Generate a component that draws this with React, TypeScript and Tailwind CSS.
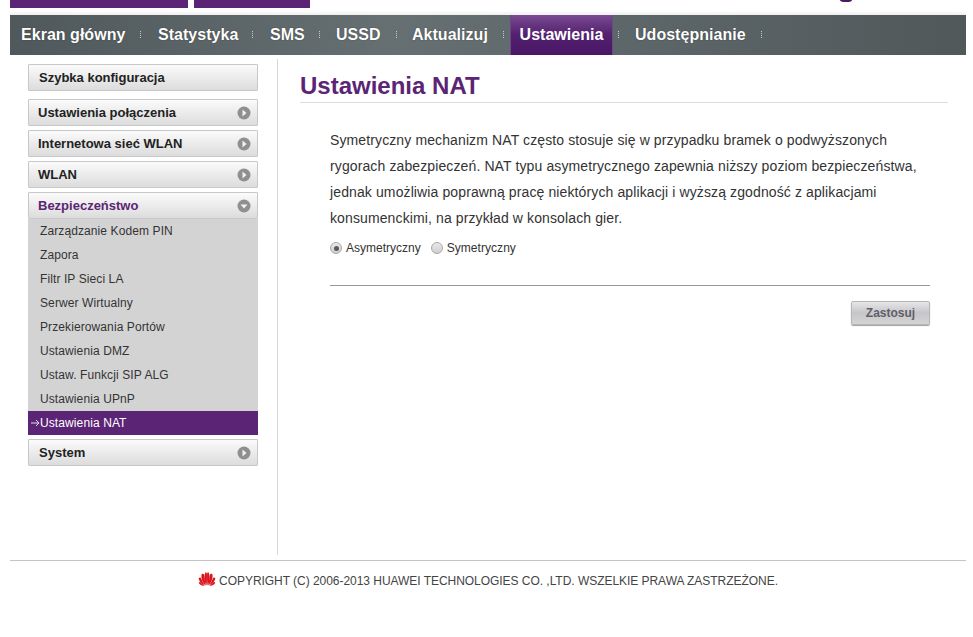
import React from "react";

const font = "font-['Liberation_Sans',Arial,sans-serif]";

function Sep({ pos }: { pos: string }) {
  return (
    <span className={`flex flex-col gap-[1px] w-[1px] absolute top-[16px] ${pos}`}>
      <i className="block h-[1px] w-[1px] bg-[#c5cccc]" />
      <i className="block h-[1px] w-[1px] bg-[#c5cccc]" />
      <i className="block h-[1px] w-[1px] bg-[#c5cccc]" />
      <i className="block h-[1px] w-[1px] bg-[#c5cccc]" />
    </span>
  );
}

const navItems = [
  { label: "Ekran główny", w: "w-[137px]", sep: "left-[130px]" },
  { label: "Statystyka", w: "w-[112px]", sep: "left-[105px]" },
  { label: "SMS", w: "w-[66px]", sep: "left-[60px]" },
  { label: "USSD", w: "w-[76px]", sep: "left-[71px]" },
  { label: "Aktualizuj", w: "w-[109px]", sep: "left-[102px]" },
];

function Arrow({ down }: { down?: boolean }) {
  return (
    <svg width="14" height="14" viewBox="0 0 14 14" className="shrink-0">
      <circle cx="7" cy="7" r="6.5" fill="#8f8f8f" />
      {down ? <path d="M3.5 5.5h7L7 9.5z" fill="#f2f2f2" /> : <path d="M5.5 3.5v7l4-3.5z" fill="#f2f2f2" />}
    </svg>
  );
}

function MenuHead({ label, mb, active, noArrow, pl = "pl-[9px]" }: { label: string; mb: string; active?: boolean; noArrow?: boolean; pl?: string }) {
  return (
    <div className={`h-[27px] ${mb} flex items-center justify-between ${pl} pr-[6px] border border-[#c8c8c8] rounded-[1px] bg-gradient-to-b from-[#fbfbfb] to-[#dcdcdc] text-[13px] font-bold ${active ? "text-[#5b2474]" : "text-[#222]"}`}>
      <span>{label}</span>
      {!noArrow && <Arrow down={active} />}
    </div>
  );
}

const subs = [
  "Zarządzanie Kodem PIN",
  "Zapora",
  "Filtr IP Sieci LA",
  "Serwer Wirtualny",
  "Przekierowania Portów",
  "Ustawienia DMZ",
  "Ustaw. Funkcji SIP ALG",
  "Ustawienia UPnP",
];

function Radio({ on }: { on?: boolean }) {
  return (
    <span className="w-[12px] h-[12px] rounded-full border border-[#a8a8a8] bg-gradient-to-b from-[#e8e8e8] to-[#d0d0d0] flex items-center justify-center shrink-0">
      {on && <span className="w-[5px] h-[5px] rounded-full bg-[#5a5a5a]" />}
    </span>
  );
}

export default function App() {
  return (
    <div className={`${font} w-[973px] h-[637px] bg-white overflow-hidden`}>
      <div className="px-[10px] w-[966px] box-content">
        <div className="h-[15px] relative bg-gradient-to-b from-white from-70% to-[#eeeeee] w-[956px]">
          <div className="flex gap-[6px]">
            <div className="w-[178px] h-[8px] bg-[#5b2474]" />
            <div className="w-[116px] h-[8px] bg-[#5b2474]" />
          </div>
          <div className="absolute left-[829px] -top-[7px] w-[14px] h-[9px] rounded-full bg-[#4a1a66]" />
        </div>

        <div className="w-[956px] h-[40px] flex bg-gradient-to-r from-[#4f585a] via-[#667072] via-40% to-[#50585a] text-white text-[16px] font-bold tracking-[0.03px]">
          {navItems.map((n) => (
            <div key={n.label} className={`${n.w} h-full relative flex items-center pl-[11px] [text-shadow:0_0_1px_#222]`}>
              {n.label}
              <Sep pos={n.sep} />
            </div>
          ))}
          <div className="w-[103px] h-full flex items-center justify-center border-x border-[#6a4a80] bg-gradient-to-b from-[#7a4a92] via-[#531f6f] to-[#4a1666]">
            Ustawienia
          </div>
          <div className="w-[150px] h-full relative flex items-center pl-[22px] [text-shadow:0_0_1px_#222]">
            Udostępnianie
            <Sep pos="left-[5px]" />
            <Sep pos="left-[148px]" />
          </div>
        </div>

        <div className="flex w-[956px] pt-[4px]">
          <div className="w-[268px] h-[496px] border-r border-[#d8d8d8] pl-[18px] pt-[5px] shrink-0">
            <div className="w-[230px]">
              <MenuHead label="Szybka konfiguracja" mb="mb-[8px]" noArrow pl="pl-[10px]" />
              <MenuHead label="Ustawienia połączenia" mb="mb-[4px]" />
              <MenuHead label="Internetowa sieć WLAN" mb="mb-[4px]" />
              <MenuHead label="WLAN" mb="mb-[4px]" />
              <MenuHead label="Bezpieczeństwo" mb="mb-0" active />
              <div className="bg-[#d3d3d3] text-[12px] text-[#333] tracking-[0.1px]">
                {subs.map((s) => (
                  <div key={s} className="h-[24px] flex items-center pl-[12px]">
                    {s}
                  </div>
                ))}
                <div className="h-[24px] flex items-center pl-[3px] bg-[#5b2474] text-white">
                  <svg width="9" height="8" viewBox="0 0 9 8" className="shrink-0" fill="none" stroke="#f4eef7" strokeWidth="0.9">
                    <path d="M0 4h8M5 1l3 3-3 3" />
                  </svg>
                  Ustawienia NAT
                </div>
              </div>
              <div className="h-[4px]" />
              <MenuHead label="System" mb="mb-0" pl="pl-[10px]" />
            </div>
          </div>

          <div className="flex-1 pl-[22px] pr-[18px]">
            <h1 className="h-[44px] border-b border-[#dddddd] text-[24px] leading-[54px] font-bold text-[#5b2474]">
              Ustawienia NAT
            </h1>
            <div className="pl-[30px] pt-[24px]">
              <p className="text-[14px] leading-[26px] text-[#333] w-[600px] whitespace-nowrap tracking-[0.115px]">
                Symetryczny mechanizm NAT często stosuje się w przypadku bramek o podwyższonych
                <br />
                rygorach zabezpieczeń. NAT typu asymetrycznego zapewnia niższy poziom bezpieczeństwa,
                <br />
                jednak umożliwia poprawną pracę niektórych aplikacji i wyższą zgodność z aplikacjami
                <br />
                konsumenckimi, na przykład w konsolach gier.
              </p>
              <div className="flex items-center h-[16px] mt-[9px] text-[12px] text-[#333]">
                <Radio on />
                <span className="ml-[4px] mr-[10px]">Asymetryczny</span>
                <Radio />
                <span className="ml-[4px] tracking-[0.05px]">Symetryczny</span>
              </div>
              <div className="w-[600px] mt-[29px] border-t border-[#999]" />
              <div className="w-[600px] flex justify-end mt-[15px]">
                <div className="w-[79px] h-[24px] rounded-[2px] border border-[#b5b5b8] shadow-[0_1px_1px_#a0a0a0] bg-gradient-to-b from-[#e6e6e8] via-[#c6c6ca] to-[#d4d4d6] flex items-center justify-center text-[12px] font-bold text-[#5f5f68]">
                  Zastosuj
                </div>
              </div>
            </div>
          </div>
        </div>

        <div className="w-[956px] mt-[5px] border-t border-[#c4c4c4] h-[40px] flex items-center justify-center text-[12px] text-[#444] pt-[1px] tracking-[-0.04px]">
          <svg width="18" height="14" viewBox="0 0 18 14" className="mr-[3px] -mt-[5px] shrink-0">
            <g fill="#d9141c">
              <path d="M8.5 13.5C6 9 5.8 4 7.4 0.4 8.4 0.2 8.8 1 8.9 2 9 6 9 10 8.5 13.5z" />
              <path d="M9.5 13.5C12 9 12.2 4 10.6 0.4 9.6 0.2 9.2 1 9.1 2 9 6 9 10 9.5 13.5z" />
              <path d="M7.8 13.5C4.6 10.5 2.8 6.5 3.6 2.2 4.6 1.4 5.6 1.6 6 2.4 6.4 6 7 10 7.8 13.5z" />
              <path d="M10.2 13.5C13.4 10.5 15.2 6.5 14.4 2.2 13.4 1.4 12.4 1.6 12 2.4 11.6 6 11 10 10.2 13.5z" />
              <path d="M7 13.5C4 12 1.2 9.6 0.6 6.4 1.4 5.4 2.2 5.4 2.8 6 4 8.8 5.4 11.2 7 13.5z" />
              <path d="M11 13.5C14 12 16.8 9.6 17.4 6.4 16.6 5.4 15.8 5.4 15.2 6 14 8.8 12.6 11.2 11 13.5z" />
              <path d="M6.6 13.8C4.4 13.8 1.8 13.2 0.8 11 1 10 1.8 9.8 2.4 10.2 3.8 11.6 5.2 12.8 6.6 13.8z" />
              <path d="M11.4 13.8C13.6 13.8 16.2 13.2 17.2 11 17 10 16.2 9.8 15.6 10.2 14.2 11.6 12.8 12.8 11.4 13.8z" />
            </g>
          </svg>
          COPYRIGHT (C) 2006-2013 HUAWEI TECHNOLOGIES CO. ,LTD. WSZELKIE PRAWA ZASTRZEŻONE.
        </div>
      </div>
    </div>
  );
}
